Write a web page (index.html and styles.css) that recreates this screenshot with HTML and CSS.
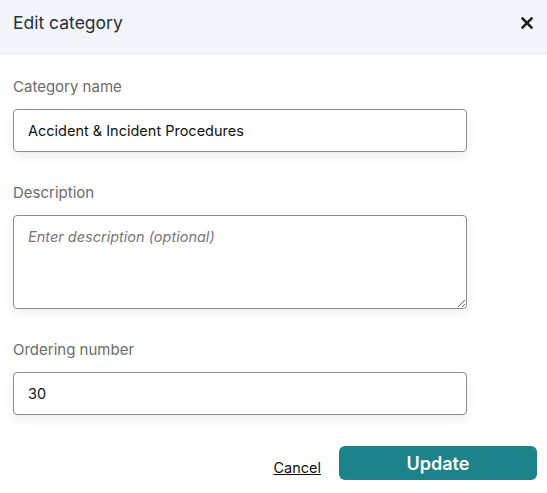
FILE: index.html
```html
<!DOCTYPE html>
<html lang="en">
<head>
    <meta charset="UTF-8">
    <meta name="viewport" content="width=device-width, initial-scale=1.0">
    <title>Edit category</title>
    <link rel="stylesheet" href="styles.css">
</head>
<body>
    <div class="modal">
        <div class="modal-header">
            <h2>Edit category</h2>
            <button class="close-btn" aria-label="Close">
                <svg width="12" height="12" viewBox="0 0 12 12">
                    <path d="M1.5 1.5 L10.5 10.5 M10.5 1.5 L1.5 10.5" stroke="#222" stroke-width="2.6" stroke-linecap="square"/>
                </svg>
            </button>
        </div>

        <form class="modal-body">
            <div class="field">
                <label for="name">Category name</label>
                <input id="name" type="text" value="Accident &amp; Incident Procedures">
            </div>
            <div class="field">
                <label for="desc">Description</label>
                <textarea id="desc" placeholder="Enter description (optional)"></textarea>
            </div>
            <div class="field">
                <label for="order">Ordering number</label>
                <input id="order" type="text" value="30">
            </div>

            <div class="actions">
                <a href="#" class="cancel">Cancel</a>
                <button type="button" class="update">Update</button>
            </div>
        </form>
    </div>
</body>
</html>
```

FILE: styles.css
```css
body {
    margin: 0;
    font-family: "Inter", "Lato", sans-serif;
    background: white;
}
.modal {
    width: 547px;
}
.modal-header {
    display: flex;
    align-items: center;
    justify-content: space-between;
    height: 54px;
    padding: 0 12px 8px 13px;
    background-color: #f4f5fa;
    border-bottom: 1px solid #e3e5ec;
    box-sizing: border-box;
}
.modal-header h2 {
    margin: 0;
    font-size: 17.5px;
    font-weight: 400;
    color: #27303f;
}
.close-btn {
    border: none;
    background: none;
    padding: 0;
    width: 16px;
    height: 16px;
    display: flex;
    align-items: center;
    justify-content: center;
    cursor: pointer;
}
.modal-body {
    padding: 23px 10px 0 13px;
}
.field {
    display: flex;
    flex-direction: column;
    width: 454px;
    margin-bottom: 31px;
}
.field label {
    font-size: 15px;
    color: #6b6b6b;
    margin-bottom: 12px;
    line-height: 20px;
}
.field input,
.field textarea {
    font-family: inherit;
    font-size: 14.5px;
    color: #111;
    border: 1px solid #8c8c8c;
    border-radius: 4px;
    box-shadow: 0 4px 12px rgba(0,0,0,0.07);
    padding: 0 14px;
    box-sizing: border-box;
    outline: none;
}
.field input {
    height: 43px;
}
.field textarea {
    height: 94px;
    padding-top: 12px;
    resize: vertical;
}
.field textarea::placeholder {
    font-style: italic;
    color: #777;
}
.actions {
    display: flex;
    justify-content: flex-end;
    align-items: flex-end;
    gap: 18px;
    margin-top: 2px;
}
.cancel {
    color: #111;
    font-size: 14.5px;
    text-decoration: underline;
    margin-bottom: 4px;
}
.update {
    width: 198px;
    height: 34px;
    border: none;
    border-radius: 6px;
    background-color: #1b8389;
    color: white;
    font-family: inherit;
    font-size: 18px;
    font-weight: 600;
    cursor: pointer;
}
```
